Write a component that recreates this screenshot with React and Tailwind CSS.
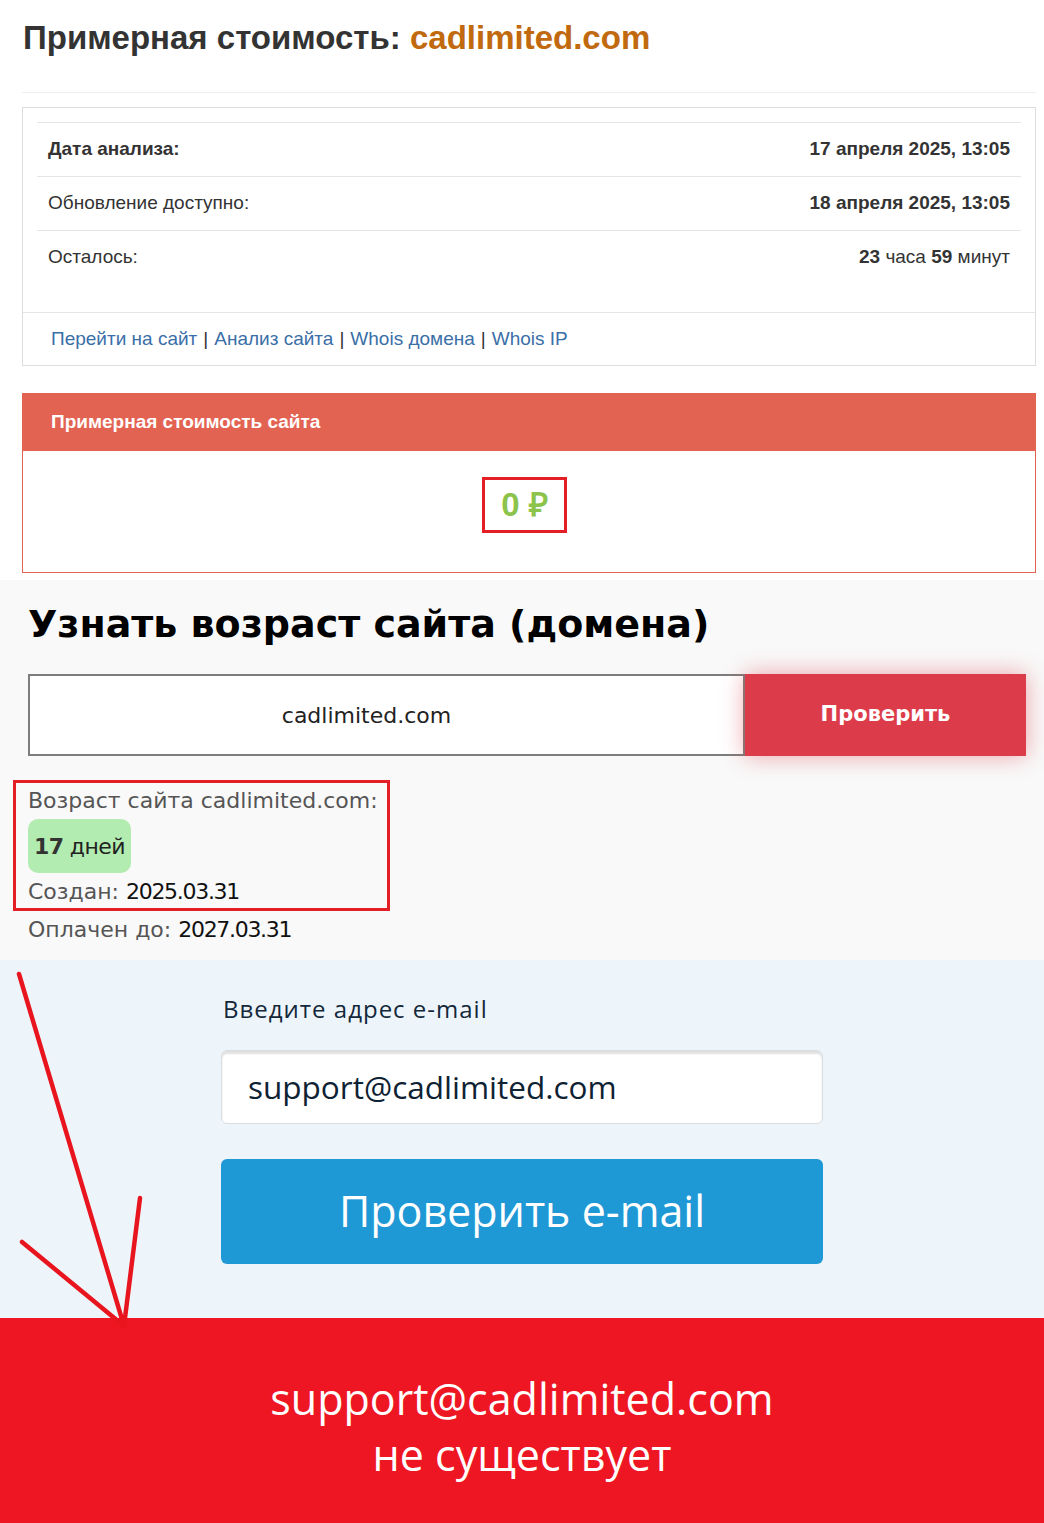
import React from 'react';

const rows = [
    { label: 'Дата анализа:', bold: true, value: <b>17 апреля 2025, 13:05</b> },
    { label: 'Обновление доступно:', value: <b>18 апреля 2025, 13:05</b> },
    { label: 'Осталось:', value: <span><b>23</b> часа <b>59</b> минут</span> },
];

const links = ['Перейти на сайт', 'Анализ сайта', 'Whois домена', 'Whois IP'];

const App = () => {
    return (
        <div className="relative w-[1044px] min-h-[1523px] bg-white overflow-hidden">
            {/* estimate block */}
            <div className="pl-[22px] pr-[8px] pt-[17px] font-['Liberation_Sans',Arial,sans-serif]">
                <h1 className="text-[33px] leading-[42px] font-bold text-[#333] pl-[1px]">
                    Примерная стоимость: <span className="text-[#c1690e]">cadlimited.com</span>
                </h1>
                <div className="mt-[33px] border-t border-[#eee]" />

                <div className="mt-[14px] border border-[#ddd]">
                    <div className="px-[14px] pt-[14px] pb-[28px]">
                        {rows.map((r) => (
                            <div key={r.label} className="h-[54px] flex items-center justify-between border-t border-[#e5e5e5] px-[11px] text-[19px] text-[#333]">
                                <span className={r.bold ? 'font-bold' : ''}>{r.label}</span>
                                <span>{r.value}</span>
                            </div>
                        ))}
                    </div>
                    <div className="h-[53px] border-t border-[#e5e5e5] px-[28px] flex items-center text-[19px] text-[#333]">
                        {links.map((l, i) => (
                            <span key={l}>
                                {i > 0 && <span className="mx-[6px]">|</span>}
                                <a className="text-[#3a6fa8]">{l}</a>
                            </span>
                        ))}
                    </div>
                </div>

                <div className="mt-[27px] border border-[#e36352]">
                    <div className="h-[57px] bg-[#e36352] px-[28px] flex items-center text-white font-bold text-[19px]">
                        Примерная стоимость сайта
                    </div>
                    <div className="h-[121px] bg-white flex items-center justify-center pb-[14px] pr-[9px]">
                        <div className="w-[85px] h-[56px] border-[3px] border-[#e31e24] flex items-center justify-center text-[33px] font-bold text-[#8cc34b]">
                            0 ₽
                        </div>
                    </div>
                </div>
            </div>

            {/* domain age */}
            <div className="mt-[7px] h-[380px] bg-[#f9f9f9] px-[28px] pt-[20px] font-['DejaVu_Sans','Inter',sans-serif]">
                <h2 className="text-[38px] leading-[48px] font-bold text-black">Узнать возраст сайта (домена)</h2>
                <div className="mt-[26px] flex h-[82px] w-[998px]">
                    <div className="flex-1 border-2 border-[#7d7d7d] bg-white flex items-center justify-center pr-[40px] text-[22px] text-[#222]">
                        cadlimited.com
                    </div>
                    <button className="w-[281px] bg-[#dc3c4a] text-white font-bold text-[21px] shadow-[0_0_22px_rgba(220,60,74,0.45)]">
                        Проверить
                    </button>
                </div>
                <div className="-ml-[15px] mt-[24px] w-[377px] h-[131px] border-[3px] border-[#e31e24] pl-[12px] pt-[4px] text-[22px] text-[#555]">
                    <div className="leading-[28px]">Возраст сайта cadlimited.com:</div>
                    <div className="mt-[4px] inline-flex h-[54px] items-center rounded-[10px] bg-[#b3ecb0] px-[6px] text-[#222] tracking-[-0.6px]">
                        <b className="font-bold text-[#333]">17</b>&nbsp;<span>дней</span>
                    </div>
                    <div className="mt-[5px] leading-[28px]">Создан: <span className="text-[#111] tracking-[-1.3px]">2025.03.31</span></div>
                </div>
                <div className="mt-[5px] text-[22px] leading-[28px] text-[#555]">
                    Оплачен до: <span className="text-[#111] tracking-[-1.3px]">2027.03.31</span>
                </div>
            </div>

            {/* email check */}
            <div className="h-[358px] bg-[#eef5fa] pt-[34px] font-['Open_Sans',sans-serif]">
                <div className="mx-auto w-[602px]">
                    <div className="pl-[2px] text-[24px] leading-[30px] tracking-[1px] text-[#13283a] font-medium">Введите адрес e-mail</div>
                    <div className="mt-[26px] h-[74px] rounded-[6px] border border-[#d9dde0] bg-white shadow-[inset_0_3px_2px_rgba(0,0,0,0.12)] flex items-center px-[26px] text-[31.5px] text-[#0e2233]">
                        support@cadlimited.com
                    </div>
                    <button className="mt-[35px] w-full h-[105px] rounded-[6px] bg-[#1f98d6] text-white text-[43px]">
                        Проверить e-mail
                    </button>
                </div>
            </div>

            {/* result */}
            <div className="h-[205px] bg-[#ee1622] flex flex-col items-center justify-center text-white text-[43px] leading-[56px] font-['Open_Sans',sans-serif] pt-[12px]">
                <div>support@cadlimited.com</div>
                <div>не существует</div>
            </div>

            {/* hand-drawn arrow annotation */}
            <svg className="absolute left-0 top-0 pointer-events-none" width="1044" height="1523">
                <g stroke="#e8151f" strokeWidth="4.5" strokeLinecap="round" fill="none">
                    <path d="M19 974 L124 1326" />
                    <path d="M140 1198 L124 1326" />
                    <path d="M22 1242 L124 1326" />
                </g>
            </svg>
        </div>
    );
};

export default App;
